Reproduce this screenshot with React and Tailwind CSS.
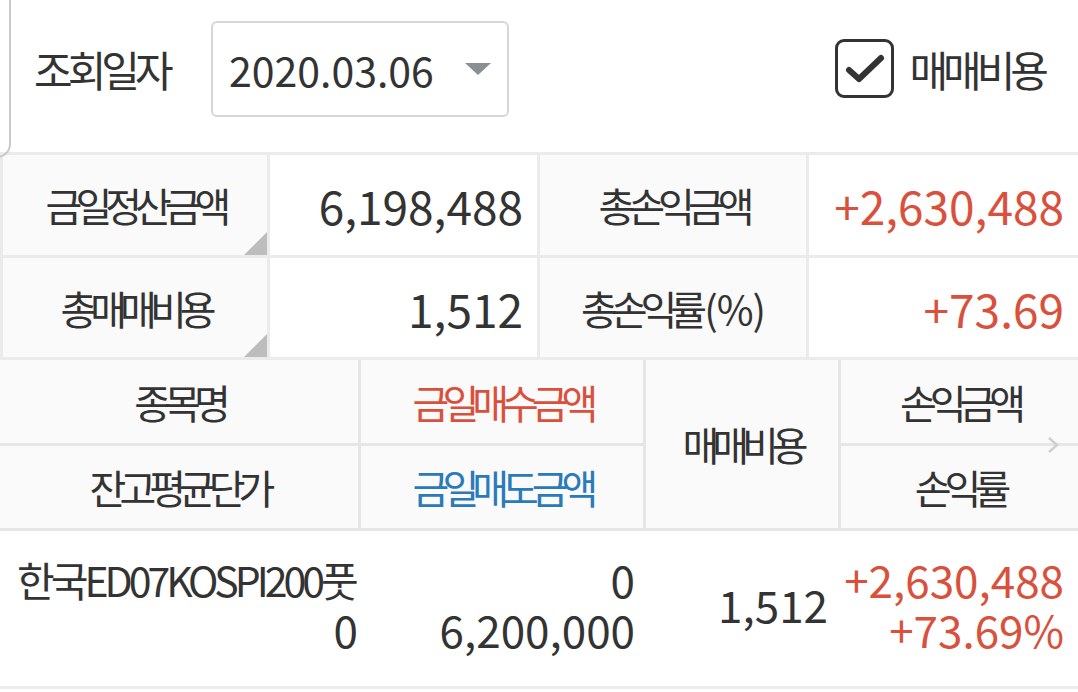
import React from "react";

// summary rows: label / value pairs
const summary = [
  [
    { label: "금일정산금액", value: "6,198,488", mark: true },
    { label: "총손익금액", value: "+2,630,488", up: true },
  ],
  [
    { label: "총매매비용", value: "1,512", mark: true },
    { label: "총손익률", suffix: "(%)", value: "+73.69", up: true },
  ],
];

const rows = [
  {
    name: "한국ED07KOSPI200풋",
    avg: "0",
    buy: "0",
    sell: "6,200,000",
    fee: "1,512",
    pnl: "+2,630,488",
    rate: "+73.69%",
  },
];

const CheckIcon = () => (
  <svg width="42" height="32" viewBox="0 0 42 32" fill="none">
    <path
      d="M5 17l10 9L37 5"
      stroke="#333"
      strokeWidth="6"
      strokeLinecap="round"
      strokeLinejoin="round"
    />
  </svg>
);

const Label = ({ children, className = "" }) => (
  <span className={`text-[40px] leading-none tracking-[-7px] ${className}`}>{children}</span>
);

export default function App() {
  return (
    <div
      className="relative w-[1078px] h-[692px] overflow-hidden bg-white text-[#333]"
      style={{ fontFamily: '"Noto Sans CJK KR", "Noto Sans", sans-serif' }}
    >
      {/* edge of the panel on the left */}
      <div className="absolute left-[-30px] top-[-30px] w-[41px] h-[188px] border-r-2 border-b-2 border-[#c9c9c9] rounded-br-[14px] z-10" />

      {/* search bar */}
      <div className="flex items-start h-[152px] pl-[34px] pt-[21px]">
        <div className="flex items-center h-[95px] w-[177px]">
          <span className="text-[42px] leading-none tracking-[-5px]">조회일자</span>
        </div>
        <div className="flex items-center justify-between w-[298px] h-[96px] border-2 border-[#d6d6d6] rounded-[6px] pl-[16px] pr-[15px]">
          <span className="text-[41px] leading-none">2020.03.06</span>
          <svg width="28" height="14" viewBox="0 0 28 14">
            <path d="M1 1h26L14 13z" fill="#8a8f96" />
          </svg>
        </div>
        <div className="ml-auto mt-[18px] mr-[34px] flex items-center gap-[15px]">
          <div className="flex items-center justify-center w-[59px] h-[59px] border-[3px] border-[#333] rounded-[9px]">
            <CheckIcon />
          </div>
          <span className="text-[42px] leading-none tracking-[-5px]">매매비용</span>
        </div>
      </div>

      {/* summary table */}
      <div className="grid grid-cols-[264px_267px_266px_1fr] grid-rows-[100px_99px] gap-[3px] bg-[#ebebeb] pl-[3px] pt-[3px] pb-[3px]">
        {summary.map((row, i) =>
          row.map((c, j) => (
            <React.Fragment key={`${i}-${j}`}>
              <div className="relative flex items-center justify-center bg-[#fafafa]">
                <Label>{c.label}</Label>
                {c.suffix && <span className="text-[40px] leading-none tracking-[-1px] ml-[4px]">{c.suffix}</span>}
                {c.mark && (
                  <div className="absolute right-0 bottom-0 w-0 h-0 border-l-[23px] border-l-transparent border-b-[23px] border-b-[#bdbdbd]" />
                )}
              </div>
              <div
                className={`flex items-center justify-end bg-white pr-[14px] text-[46px] leading-none ${
                  c.up ? "text-[#d9513c]" : ""
                }`}
              >
                {c.value}
              </div>
            </React.Fragment>
          ))
        )}
      </div>

      {/* list header */}
      <div className="relative grid grid-cols-[358px_282px_192px_1fr] grid-rows-[83px_82px] gap-[3px] bg-[#e6e6e6] pb-[3px]">
        <div className="flex items-center justify-center bg-[#fafafa]">
          <Label>종목명</Label>
        </div>
        <div className="flex items-center justify-center bg-[#fafafa]">
          <Label className="text-[#d9513c]">금일매수금액</Label>
        </div>
        <div className="row-span-2 flex items-center justify-center bg-[#fafafa]">
          <Label>매매비용</Label>
        </div>
        <div className="flex items-center justify-center bg-[#fafafa]">
          <Label>손익금액</Label>
        </div>
        <div className="flex items-center justify-center bg-[#fafafa]">
          <Label>잔고평균단가</Label>
        </div>
        <div className="flex items-center justify-center bg-[#fafafa]">
          <Label className="text-[#2b7bbb]">금일매도금액</Label>
        </div>
        <div className="flex items-center justify-center bg-[#fafafa]">
          <Label>손익률</Label>
        </div>
        <svg
          className="absolute right-[19px] top-[76px]"
          width="12"
          height="18"
          viewBox="0 0 12 18"
          fill="none"
        >
          <path d="M2 2l8 7-8 7" stroke="#cfcfcf" strokeWidth="2.5" />
        </svg>
      </div>

      {/* list rows */}
      {rows.map((r) => (
        <div
          key={r.name}
          className="grid grid-cols-[358px_282px_192px_1fr] h-[158px] gap-[3px] border-b-[3px] border-[#ececec] bg-white text-[44px] leading-[50px]"
        >
          <div className="flex flex-col justify-center pb-[9px]">
            <span className="pl-[17px] text-[41px] tracking-[-4px] whitespace-nowrap">{r.name}</span>
            <span className="text-right">{r.avg}</span>
          </div>
          <div className="flex flex-col justify-center text-right pr-[8px] pb-[9px]">
            <span>{r.buy}</span>
            <span>{r.sell}</span>
          </div>
          <div className="flex items-center justify-end pr-[10px] pb-[9px]">{r.fee}</div>
          <div className="flex flex-col justify-center text-right pr-[14px] pb-[9px] text-[#d9513c]">
            <span>{r.pnl}</span>
            <span>{r.rate}</span>
          </div>
        </div>
      ))}
    </div>
  );
}
